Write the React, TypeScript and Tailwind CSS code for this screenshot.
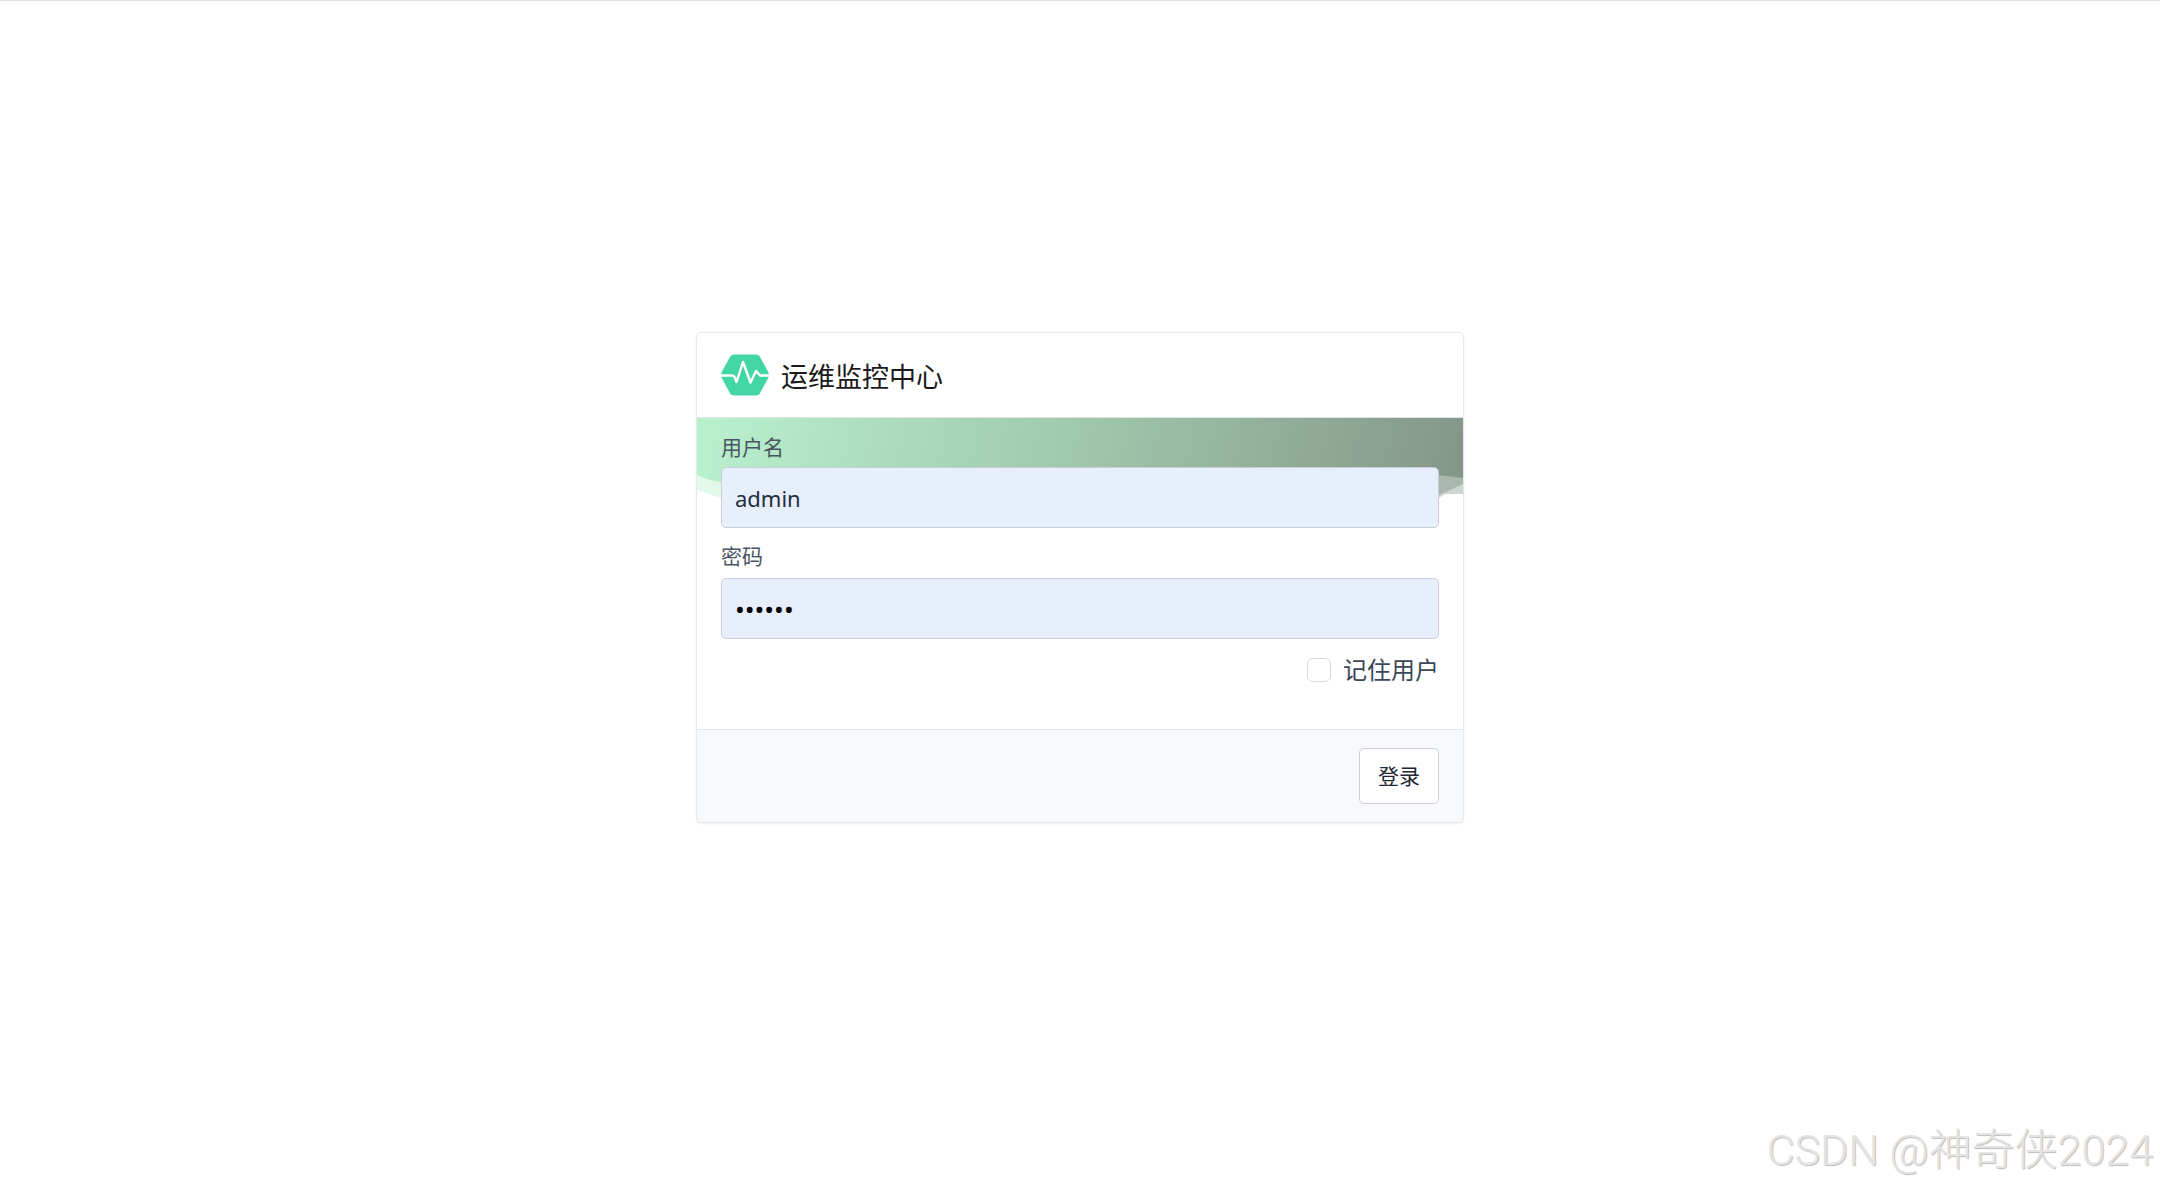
const Logo = () => (
  <svg width="48" height="44" viewBox="0 0 48 44" className="shrink-0">
    <path
      d="M13 1.5 H35 Q37.5 1.5 38.8 3.6 L47 18.5 Q48.6 22 47 25.5 L38.8 40.4 Q37.5 42.5 35 42.5 H13 Q10.5 42.5 9.2 40.4 L1 25.5 Q-0.6 22 1 18.5 L9.2 3.6 Q10.5 1.5 13 1.5 Z"
      fill="#43d6a5"
    />
    <path
      d="M0 22.5 H11 Q13 22.5 14 25 L15.5 29 L22 9 L29.5 29.5 L35 18 L39 22.5 H48"
      fill="none"
      stroke="#fff"
      strokeWidth="2.4"
      strokeLinejoin="round"
    />
  </svg>
);

const Band = () => (
  <svg
    className="absolute left-0 top-0 h-[82px] w-full"
    viewBox="0 0 766 82"
    preserveAspectRatio="none"
  >
    <defs>
      <linearGradient id="band" x1="0" y1="0" x2="1" y2="0.02">
        <stop offset="0" stopColor="#b9f1cd" />
        <stop offset="0.5" stopColor="#a0c8ac" />
        <stop offset="1" stopColor="#84988a" />
      </linearGradient>
    </defs>
    <path d="M0 0 H766 V76 H748 L742 80 H24 L0 72 Z" fill="url(#band)" opacity="0.4" />
    <path d="M0 0 H766 V66 L742 77 L24 64 Q10 62 0 57 Z" fill="url(#band)" opacity="0.5" />
    <path d="M0 0 H766 V60 L742 57 L24 64 Q10 62 0 57 Z" fill="url(#band)" />
  </svg>
);

const fieldClass =
  "h-[61px] w-full rounded-[5px] border border-[#c8cdd6] bg-[#e8effc] px-[13px] outline-none";

export default function App() {
  return (
    <div className="h-screen overflow-hidden border-t border-[#e0e0e0] bg-white font-['Noto_Sans','Noto_Sans_CJK_SC',sans-serif]">
      <div className="mx-auto mt-[331px] flex w-[768px] flex-col rounded-[5px] border border-[#e6e8eb] bg-white shadow-[0_1px_2px_rgba(30,40,50,0.08)]">
        <div className="flex h-[85px] items-center gap-[12px] border-b border-[#e2e4e6] px-[24px]">
          <Logo />
          <span className="pt-[2px] text-[27px] leading-none text-[#1a1a1a]">运维监控中心</span>
        </div>

        <div className="relative h-[311px] px-[24px]">
          <Band />
          <div className="relative">
            <label className="flex h-[49px] items-center pt-[10px] text-[21px] text-[#4a5563]">用户名</label>
            <input className={`${fieldClass} text-[22px] text-[#232e3c]`} readOnly defaultValue="admin" />
          </div>
          <div className="relative mt-[11px]">
            <label className="flex h-[39px] items-center pb-[3px] text-[21px] text-[#4a5563]">密码</label>
            <input
              className={`${fieldClass} text-[26px] text-black`}
              type="password"
              readOnly
              defaultValue="123456"
            />
          </div>
          <label className="mt-[17px] flex items-center justify-end gap-[12px] text-[24px] leading-[27px] text-[#3c4858]">
            <span className="h-[24px] w-[24px] rounded-[6px] border border-[#d6dae0] bg-white" />
            记住用户
          </label>
        </div>

        <div className="flex h-[93px] items-center justify-end rounded-b-[5px] border-t border-[#e2e5e9] bg-[#f8f9fb] px-[24px]">
          <button className="h-[56px] w-[80px] rounded-[5px] border border-[#cdd1d8] bg-white pt-[2px] text-[21px] text-[#1f2733]">
            登录
          </button>
        </div>
      </div>

      <div className="absolute bottom-[7px] right-[7px] font-['Roboto','Noto_Sans_CJK_SC',sans-serif] text-[43px] font-light leading-[60px] text-[#e4e4e4] [text-shadow:1px_1px_1px_#bdbdbd]">
        CSDN @神奇侠2024
      </div>
    </div>
  );
}
